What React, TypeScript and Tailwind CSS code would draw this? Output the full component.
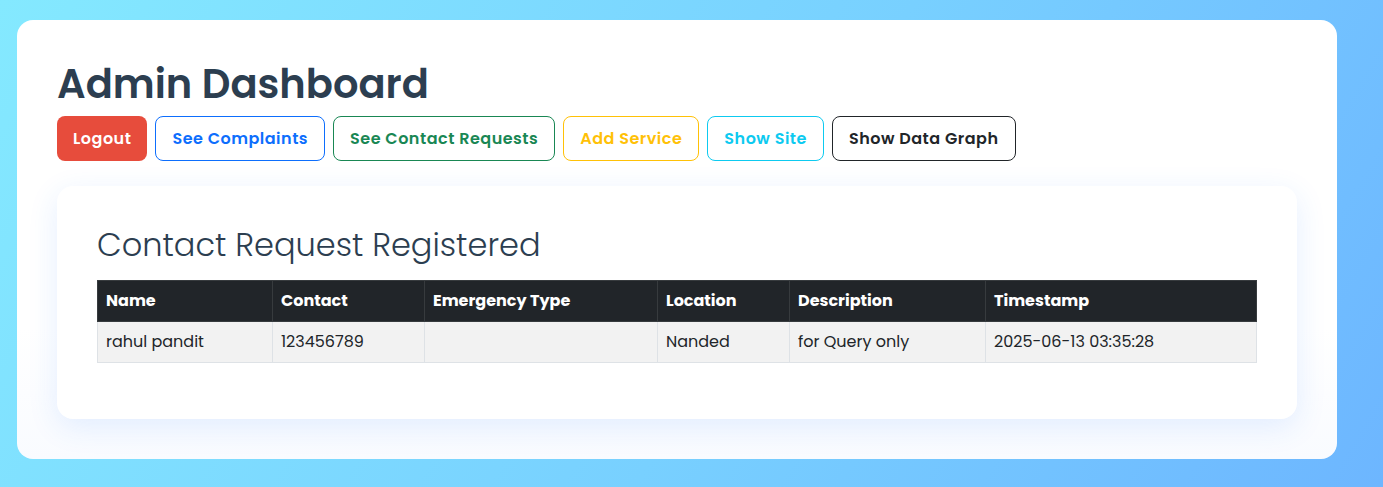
import React from "react"

const buttons = [
  { label: "See Complaints", cls: "border-[#0d6efd] text-[#0d6efd]" },
  { label: "See Contact Requests", cls: "border-[#198754] text-[#198754]" },
  { label: "Add Service", cls: "border-[#ffc107] text-[#ffc107]" },
  { label: "Show Site", cls: "border-[#0dcaf0] text-[#0dcaf0]" },
  { label: "Show Data Graph", cls: "border-[#212529] text-[#212529]" },
]

const columns = [
  { name: "Name", w: "w-[175px]" },
  { name: "Contact", w: "w-[152px]" },
  { name: "Emergency Type", w: "w-[233px]" },
  { name: "Location", w: "w-[132px]" },
  { name: "Description", w: "w-[196px]" },
  { name: "Timestamp", w: "w-[271px]" },
]

const rows = [
  ["rahul pandit", "123456789", "", "Nanded", "for Query only", "2025-06-13 03:35:28"],
]

export default function App() {
  return (
    <div
      className="min-h-[487px] bg-[linear-gradient(120deg,#84e9ff_0%,#78d0ff_55%,#6db6ff_100%)] pt-5 pb-7 pl-[17px] text-[#212529]"
      style={{ fontFamily: '"Poppins", "Open Sans", sans-serif' }}
    >
      <div className="w-[1320px] rounded-2xl bg-[linear-gradient(180deg,#ffffff_0%,#ffffff_70%,#f9fbff_100%)] p-10">
        <h1 className="mb-2 text-[40px] font-semibold leading-[1.2] text-[#2c3e50]">Admin Dashboard</h1>

        <div className="flex gap-2">
          <button className="h-[45px] rounded-lg bg-[#e74c3c] px-4 text-base font-semibold tracking-[0.5px] text-white">
            Logout
          </button>
          {buttons.map((b) => (
            <button
              key={b.label}
              className={`h-[45px] rounded-lg border bg-white px-4 text-base font-semibold tracking-[0.5px] ${b.cls}`}
            >
              {b.label}
            </button>
          ))}
        </div>

        <div className="mt-[25px] rounded-2xl bg-white p-10 shadow-[0_8px_30px_rgba(40,120,255,0.12)]">
          <h2 className="mb-4 text-[32px] font-light leading-[1.2] text-[#2c3e50]">Contact Request Registered</h2>

          <table className="mb-4 w-full table-fixed border-collapse text-left text-base">
            <thead>
              <tr className="bg-[#212529] text-white">
                {columns.map((c) => (
                  <th key={c.name} className={`${c.w} border border-[#373b3e] px-2 py-2 font-bold leading-6`}>
                    {c.name}
                  </th>
                ))}
              </tr>
            </thead>
            <tbody>
              {rows.map((r, i) => (
                <tr key={i} className="bg-[#f2f2f2]">
                  {r.map((v, j) => (
                    <td key={j} className="border border-[#dee2e6] px-2 py-2 leading-6">
                      {v}
                    </td>
                  ))}
                </tr>
              ))}
            </tbody>
          </table>
        </div>
      </div>
    </div>
  )
}
